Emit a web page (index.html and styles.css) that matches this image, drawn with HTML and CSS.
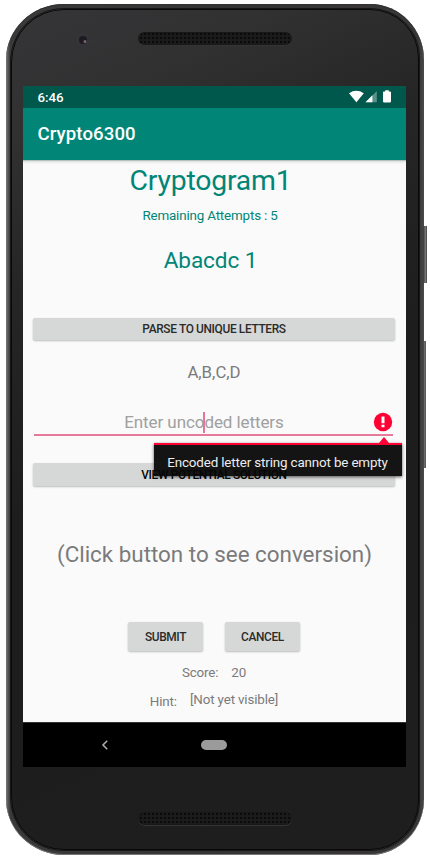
FILE: index.html
```html
<!DOCTYPE html>
<html lang="en">
<head>
<meta charset="utf-8">
<title>Crypto6300</title>
<link rel="stylesheet" href="styles.css">
</head>
<body>
<div class="phone">
  <i class="key power"></i><i class="key volume"></i>
  <div class="body">
    <header class="bezel top">
      <i class="camera"></i>
      <i class="speaker"></i>
    </header>
    <main class="screen">
      <div class="status">
        <span>6:46</span>
        <svg width="43" height="14" viewBox="0 0 43 14" fill="#fff">
          <path d="M0 3.2Q7.3-1.7 14.8 3.2L7.4 12.2Z"/>
          <path d="M16.5 12.2 27.8 1v11.2Z" opacity=".35"/>
          <path d="M16.5 12.2 23.4 5.3v6.9Z"/>
          <path d="M36.2.2h3.6v1.2h1.3q.9 0 .9.9v9.3q0 .8-.9.8h-6.2q-.9 0-.9-.8V2.3q0-.9.9-.9h1.3Z"/>
        </svg>
      </div>
      <div class="appbar">Crypto6300</div>
      <div class="content">
        <h1>Cryptogram1</h1>
        <p class="attempts">Remaining Attempts : 5</p>
        <h2>Abacdc 1</h2>
        <button class="wide">PARSE TO UNIQUE LETTERS</button>
        <p class="letters">A,B,C,D</p>
        <div class="field">
          <span class="hint-text">Enter uncoded letters</span>
          <i class="cursor"></i>
          <svg class="alert" width="20" height="20" viewBox="0 0 20 20">
            <circle cx="10" cy="10" r="9.2" fill="#ff0035"/>
            <path d="M8.5 4.6h3v6.6h-3zM8.5 12.7h3v2.6h-3z" fill="#fff"/>
          </svg>
          <div class="tooltip"><span>Encoded letter string cannot be empty</span></div>
        </div>
        <button class="wide view"><span>VIEW POTENTIAL SOLUTION</span></button>
        <p class="conversion">(Click button to see conversion)</p>
        <div class="actions"><button class="submit">SUBMIT</button><button class="cancel">CANCEL</button></div>
        <div class="score"><span>Score:</span><span>20</span></div>
        <div class="hint"><span class="label">Hint:</span><span class="value">[Not yet visible]</span></div>
      </div>
      <nav>
        <svg class="back" width="8" height="12" viewBox="0 0 8 12"><path d="M6.2 1.8 2 6l4.2 4.2" fill="none" stroke="#aaa" stroke-width="1.6"/></svg>
        <i class="home"></i>
      </nav>
    </main>
    <footer class="bezel bottom"><i class="speaker"></i></footer>
  </div>
</div>
</body>
</html>
```
FILE: styles.css
```css
* { box-sizing: border-box; margin: 0; padding: 0; }
body { width: 430px; height: 861px; background: #fff; font-family: Roboto, sans-serif; overflow: hidden; }
i { display: block; }
h1, h2 { font-weight: 400; }
.phone {
  position: relative; width: 418px; height: 851px; margin: 4px 0 0 6px; padding: 5px;
  border-radius: 58px 54px 54px 58px / 56px;
  background: linear-gradient(90deg, #777 0, #3a3a3a 4px, #343434 50%, #393637 413px, #4b494a 100%);
  box-shadow: inset 0 1px 0 #333, inset 0 -1px 0 #777;
}
.key { position: absolute; background: linear-gradient(90deg, #333, #777 60%, #444); }
.power { left: 417px; top: 222px; width: 4px; height: 57px; }
.volume { left: 417px; top: 337px; width: 3px; height: 127px; }
.body {
  height: 841px; padding: 0 0 0 11px; border: 1px solid #090909; border-radius: 53px 49px 49px 53px;
  background: linear-gradient(155deg, #353436 0, #313132 12%, #262626 26%, #1d1d1d 50%, #1e1e1f 100%);
  box-shadow: 0 0 0 1px #171717;
}
.bezel { display: flex; align-items: flex-start; width: 383px; }
.top { height: 76px; padding: 22px 0 0 53px; }
.camera { width: 16px; height: 16px; margin: 0 -1px 0 -1px; border: 4px solid #343437; border-radius: 50%; background: radial-gradient(circle at 75% 70%, #79616d 0 1px, #1b1b21 2px); }
.speaker {
  width: 154px; height: 13px; margin-left: 48px; border-radius: 7px;
  background: radial-gradient(circle, #0a0a0a 0 .8px, transparent 1.2px) 1px 0 / 4px 4px, #1b1b1b;
  box-shadow: inset 0 0 0 1px #181818, 0 1px 0 #343434;
}
.bottom { padding: 45px 0 0 115px; }
.bottom .speaker { margin: 0; }
.screen { width: 383px; height: 681px; background: #fafafa; display: flex; flex-direction: column; overflow: hidden; }
.status { height: 22px; padding: 0 14px 0 14.5px; background: #00574b; color: #fff; display: flex; justify-content: space-between; align-items: center; font-size: 13.3px; font-weight: 500; }
.appbar { height: 52px; padding-left: 14.5px; line-height: 53px; background: #008577; color: #fff; font-size: 18.6px; font-weight: 500; letter-spacing: .1px; box-shadow: 0 1px 1px #b5c2c0, 0 2px 3px #ddd; clip-path: inset(0 0 -5px 0); }
.content { height: 562px; display: flex; flex-direction: column; align-items: center; color: #7a7a7a; white-space: nowrap; }
h1 { height: 40px; line-height: 41px; font-size: 28.4px; letter-spacing: -.2px; color: #008577; margin-right: 8px; }
.attempts { height: 30px; line-height: 31px; font-size: 13.4px; letter-spacing: -.17px; color: #008577; margin-right: 9px; }
h2 { height: 62px; line-height: 62px; font-size: 22.6px; letter-spacing: -.1px; color: #008577; margin-right: 8px; }
button { font: 500 11.9px Roboto, sans-serif; letter-spacing: -.35px; color: #2a2a2a; background: #d6d8d7; border: 0; border-radius: 2px; box-shadow: 0 1px 2px #bbb; }
.wide { width: 362px; height: 22px; margin: 26px 1px 0 0; flex: none; }
.letters { height: 62px; line-height: 64px; font-size: 16.8px; margin-right: 1px; }
.field { position: relative; width: 359px; height: 34px; margin-right: 3px; text-align: center; border-bottom: 2px solid #e57a9b; }
.hint-text { display: block; font-size: 17px; letter-spacing: -.08px; line-height: 41px; color: #a0a0a0; margin-right: 18px; }
.cursor { position: absolute; left: 169px; top: 10px; width: 2px; height: 21px; background: #e5769a; }
.alert { position: absolute; right: 0; top: 10px; }
.tooltip { position: absolute; z-index: 1; left: 120px; top: 41px; width: 248px; height: 33px; background: #141414; border-top: 2px solid #ff0035; color: #eee; font-size: 13.4px; letter-spacing: -.15px; box-shadow: 0 1px 3px #555; }
.tooltip span { display: block; margin-top: 10px; line-height: 15px; }
.tooltip::before { content: ""; position: absolute; left: 225px; top: -8px; border: 5px solid transparent; border-top: 0; border-bottom: 6px solid #ff0035; }
.view { height: 23px; margin-top: 27px; }
.view span { position: relative; z-index: 2; display: inline-block; line-height: 10px; padding-top: 2px; color: #060606; }
.conversion { height: 136px; line-height: 137px; font-size: 22.4px; }
.actions { display: flex; gap: 22px; margin-right: 1px; }
.actions button { width: 75px; height: 29px; }
.score { display: flex; gap: 13px; height: 44px; line-height: 44px; font-size: 13.4px; letter-spacing: -.15px; margin-right: 1px; }
.hint { display: flex; gap: 13px; line-height: 16px; font-size: 13.4px; letter-spacing: -.15px; margin: -3px 1px 0 0; }
.label { padding-top: 2px; }
nav { height: 45px; background: #000; display: flex; align-items: center; padding-left: 78px; border-top: 1px solid #333; }
.home { width: 26px; height: 10px; margin-left: 92px; border-radius: 5px; background: #9b9b9b; }
```
